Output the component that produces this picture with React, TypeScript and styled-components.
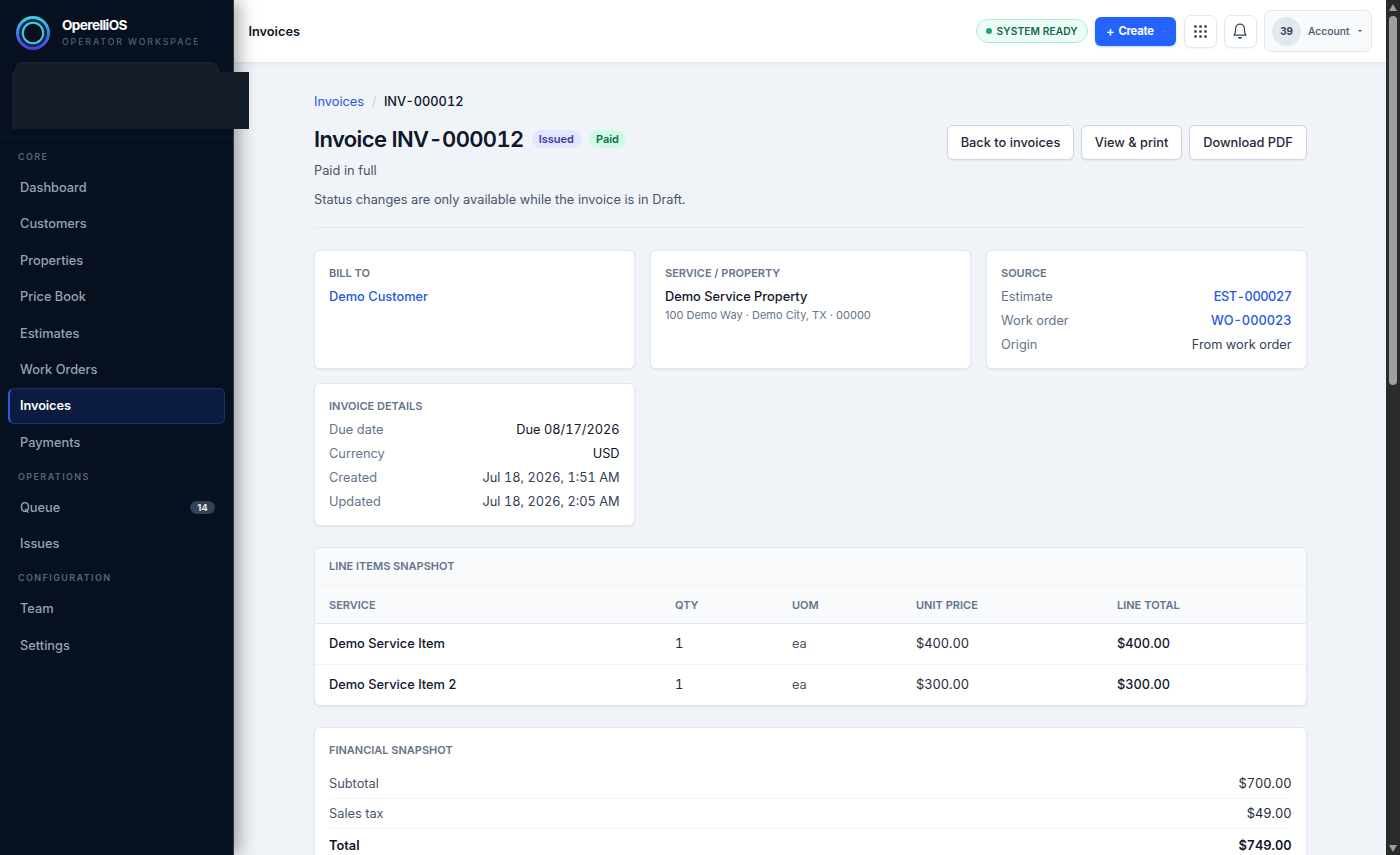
import React, { ReactNode } from 'react'
import styled, { createGlobalStyle, css } from 'styled-components';

type NavEntry = {
    label: string;
    active?: boolean;
    count?: number;
}

const navGroups: { title: string; items: NavEntry[] }[] = [{
    title: 'Core',
    items: [
        { label: 'Dashboard' },
        { label: 'Customers' },
        { label: 'Properties' },
        { label: 'Price Book' },
        { label: 'Estimates' },
        { label: 'Work Orders' },
        { label: 'Invoices', active: true },
        { label: 'Payments' },
    ],
}, {
    title: 'Operations',
    items: [{ label: 'Queue', count: 14 }, { label: 'Issues' }],
}, {
    title: 'Configuration',
    items: [{ label: 'Team' }, { label: 'Settings' }],
}];

const lineItems = [
    { service: 'Demo Service Item', qty: 1, uom: 'ea', price: '$400.00', total: '$400.00' },
    { service: 'Demo Service Item 2', qty: 1, uom: 'ea', price: '$300.00', total: '$300.00' },
];

const GlobalStyle = createGlobalStyle`
    * { box-sizing: border-box; }
    body {
        margin: 0;
        overflow: hidden;
        background: #f0f3f8;
        font-family: Inter, "Liberation Sans", sans-serif;
        font-size: 12.8px;
        line-height: 20px;
        color: #0f172a;
    }
    button { font-family: inherit; }
    h1, h2, p { margin: 0; }
`

const Shell = styled.div`
    display: grid;
    grid-template-columns: 234px 1fr 14px;
    height: 855px;
    overflow: hidden;
`

const Sidebar = styled.aside`
    position: relative;
    z-index: 2;
    background: #06101f;
    border-right: 1px solid #303a48;
    box-shadow: 4px 0 18px rgba(0, 0, 0, 0.38);
`

const SidebarTop = styled.div`
    height: 138px;
    margin-bottom: 2.4px;
    border-bottom: 1px solid #0d1725;
`

const Brand = styled.div`
    display: flex;
    align-items: center;
    gap: 11px;
    height: 62px;
    padding: 4px 0 0 15px;
`

const BrandName = styled.div`
    font-size: 13.6px;
    font-weight: 700;
    line-height: 17px;
    letter-spacing: -0.6px;
    color: #fff;
`

const BrandSub = styled.div`
    font-size: 8.8px;
    font-weight: 500;
    line-height: 15px;
    letter-spacing: 1.88px;
    color: #556274;
    text-transform: uppercase;
`

const WorkspaceCard = styled.div`
    width: 204px;
    height: 58px;
    margin-left: 15px;
    border: 1px solid #1b2531;
    border-radius: 8px;
    background: #141e29;
`

const WorkspaceMask = styled.div`
    position: absolute;
    left: 12px;
    top: 72px;
    width: 237px;
    height: 57px;
    background: #151e28;
`

const GroupTitle = styled.div`
    height: 28.5px;
    padding: 6.6px 18px 0;
    font-size: 9px;
    font-weight: 600;
    letter-spacing: 1.4px;
    text-transform: uppercase;
    color: #5a6778;
`

const NavItem = styled.a<{ $active?: boolean }>`
    display: flex;
    align-items: center;
    justify-content: space-between;
    height: 36.45px;
    margin: 0 8px;
    padding: 1.4px 9px 0 11px;
    border: 1px solid transparent;
    border-radius: 6px;
    font-weight: 500;
    color: #95a2b5;
    ${({ $active }) => $active && css`
        background: #0c1c40;
        border-color: #1b3069;
        border-left: 2px solid #2c5be0;
        padding-left: 10px;
        font-weight: 600;
        letter-spacing: -0.1px;
        color: #fff;
    `}
`

const NavCount = styled.span`
    width: 25px;
    height: 13px;
    border-radius: 7px;
    background: #334155;
    font-size: 9.6px;
    font-weight: 700;
    line-height: 13px;
    text-align: center;
    color: #e2e8f0;
`

const Main = styled.div`
    display: flex;
    flex-direction: column;
    min-width: 0;
    overflow: hidden;
`

const TopBar = styled.header`
    display: flex;
    align-items: center;
    justify-content: space-between;
    flex: none;
    height: 63px;
    padding: 0 14px;
    background: #fff;
    border-bottom: 1px solid #e3e7ee;
    box-shadow: 0 1px 3px rgba(15, 23, 42, 0.05);
`

const TopTitle = styled.div`
    padding: 1px 0 0 0.4px;
    font-weight: 600;
`

const TopActions = styled.div`
    display: flex;
    align-items: center;
`

const ReadyPill = styled.div`
    display: flex;
    align-items: center;
    gap: 4.5px;
    width: 112px;
    height: 24px;
    margin-right: 7px;
    padding: 0 0 0 9px;
    border: 1px solid #a7efd0;
    border-radius: 12px;
    background: #ecfdf5;
    font-size: 10.2px;
    font-weight: 600;
    letter-spacing: 0.12px;
    color: #13694d;
    white-space: nowrap;
`

const ReadyDot = styled.span`
    width: 6px;
    height: 6px;
    border-radius: 50%;
    background: #18a673;
`

const CreateButton = styled.button`
    display: flex;
    align-items: center;
    gap: 4px;
    width: 81px;
    height: 29px;
    margin-right: 8px;
    padding: 0 0 0 11px;
    border: 0;
    border-radius: 6px;
    background: #2563ff;
    font-size: 11.2px;
    font-weight: 700;
    letter-spacing: -0.2px;
    color: #fff;
    box-shadow: 0 1px 2px rgba(37, 99, 235, 0.3);
`

const Plus = styled.span`
    font-size: 12.8px;
    font-weight: 600;
`

const CreateCaret = styled.span`
    width: 5px;
    height: 1px;
    margin-left: 3px;
    background: #4a70e0;
`

const IconButton = styled.button`
    display: flex;
    align-items: center;
    justify-content: center;
    width: 33px;
    height: 33px;
    margin-right: 7px;
    padding: 0 1px 0 0;
    border: 1px solid #e2e8f0;
    border-radius: 7px;
    background: #fff;
    color: #334155;
    box-shadow: 0 1px 2px rgba(15, 23, 42, 0.05);
`

const AccountButton = styled.button`
    display: flex;
    align-items: center;
    width: 108px;
    height: 42px;
    padding: 0 0 0 7px;
    border: 1px solid #e2e8f0;
    border-radius: 7px;
    background: #f8fafc;
    font-size: 10.4px;
    font-weight: 500;
    color: #475569;
`

const Avatar = styled.span`
    width: 29px;
    height: 29px;
    margin-right: 7px;
    border-radius: 50%;
    background: #e2e8f0;
    font-size: 9.8px;
    font-weight: 700;
    line-height: 29px;
    color: #334155;
`

const AccountCaret = styled.span`
    margin-left: 8px;
    border: 2px solid transparent;
    border-top-color: #475569;
    border-bottom: 0;
`

const Content = styled.main`
    padding: 29px 79px 0 80px;
`

const Link = styled.a<{ $tight?: boolean }>`
    color: #2558dc;
    letter-spacing: ${({ $tight }) => $tight ? '-0.45px' : 'normal'};
`

const Breadcrumb = styled.nav`
    display: flex;
    gap: 7.6px;
    font-variant-numeric: tabular-nums;
`

const Slash = styled.span`
    color: #cbd5e1;
`

const PageHead = styled.div`
    display: flex;
    justify-content: space-between;
    height: 116px;
    padding-top: 13px;
    border-bottom: 1px solid #e4e8ee;
`

const TitleRow = styled.div`
    display: flex;
    align-items: center;
    gap: 8px;
    height: 28px;
`

const Title = styled.h1`
    font-size: 22px;
    font-weight: 600;
    line-height: 28px;
    letter-spacing: -0.63px;
    font-variant-numeric: tabular-nums;
    white-space: nowrap;
`

const Badge = styled.span<{ $tone: 'indigo' | 'green' }>`
    height: 18px;
    padding: 0 7px;
    border-radius: 9px;
    font-size: 11px;
    font-weight: 600;
    line-height: 18px;
    background: ${({ $tone }) => $tone === 'indigo' ? '#e0e7ff' : '#d1fae5'};
    color: ${({ $tone }) => $tone === 'indigo' ? '#4338ab' : '#08704f'};
`

const Note = styled.p<{ $gap: number }>`
    margin-top: ${({ $gap }) => $gap}px;
    color: #475569;
`

const HeadActions = styled.div`
    display: flex;
    gap: 7px;
`

const ActionButton = styled.button<{ $width: number }>`
    width: ${({ $width }) => $width}px;
    height: 35px;
    padding: 0;
    border: 1px solid #cdd5e1;
    border-radius: 6px;
    background: #fff;
    font-size: 12.8px;
    font-weight: 500;
    color: #1e293b;
    box-shadow: 0 1px 2px rgba(15, 23, 42, 0.06);
`

const CardGrid = styled.div`
    display: grid;
    grid-template-columns: repeat(3, 1fr);
    gap: 14.4px 15px;
    margin-top: 22px;
`

const cardCss = css`
    border: 1px solid #e2e7ee;
    border-radius: 6px;
    background: #fff;
    box-shadow: 0 1px 2px rgba(15, 23, 42, 0.07);
`

const InfoCard = styled.section`
    ${cardCss}
    padding: 14px 14.4px 13.2px 14px;
`

const CardTitle = styled.h2`
    margin-bottom: 5.8px;
    font-size: 11px;
    font-weight: 600;
    line-height: 16px;
    color: #64748b;
    text-transform: uppercase;
`

const Strong = styled.div`
    font-weight: 500;
`

const Address = styled.div`
    margin-top: -0.8px;
    font-size: 11px;
    line-height: 18px;
    color: #64748b;
`

const Field = styled.div`
    display: flex;
    justify-content: space-between;
    color: #64748b;

    & + & { margin-top: 4px; }
`

const FieldValue = styled.span<{ $medium?: boolean; $soft?: boolean }>`
    font-weight: ${({ $medium }) => $medium ? 500 : 400};
    font-variant-numeric: tabular-nums;
    color: ${({ $soft }) => $soft ? '#334155' : '#0f172a'};
`

const TableCard = styled.section`
    ${cardCss}
    margin-top: 21px;
    overflow: hidden;
`

const TableTitle = styled.h2`
    height: 37.5px;
    padding-left: 14px;
    border-bottom: 1px solid #eef1f5;
    background: #f9fafc;
    font-size: 11px;
    font-weight: 600;
    line-height: 37px;
    color: #64748b;
    text-transform: uppercase;
`

const TableRow = styled.div<{ $head?: boolean }>`
    display: grid;
    grid-template-columns: 346px 117px 124px 201px 1fr;
    align-items: center;
    height: 40.8px;
    padding-left: 14px;
    font-variant-numeric: tabular-nums;

    & + & { border-top: 1px solid #f1f4f8; }

    ${({ $head }) => $head && css`
        height: 37.4px;
        background: #f9fafc;
        font-size: 11px;
        font-weight: 600;
        color: #64748b;
        text-transform: uppercase;

        && + div { border-top: 1px solid #e2e7ee; }
    `}
`

const Cell = styled.span<{ $tone?: 'soft' | 'mid'; $weight?: number }>`
    font-weight: ${({ $weight }) => $weight ?? 'inherit'};
    color: ${({ $tone }) => $tone === 'soft' ? '#475569' : $tone === 'mid' ? '#1e293b' : 'inherit'};
`

const FinanceCard = styled.section`
    ${cardCss}
    height: 170px;
    margin-top: 21.4px;
    padding: 14px 14.4px 0 14px;
`

const FinanceRow = styled.div<{ $total?: boolean }>`
    display: flex;
    justify-content: space-between;
    height: 30px;
    padding-top: 5px;
    border-bottom: 1px solid #f1f4f8;
    font-variant-numeric: tabular-nums;
    color: #475569;
    ${({ $total }) => $total && css`
        padding-top: 7px;
        border-bottom: 0;
        font-weight: 600;
        color: #0f172a;
    `}
`

const FinanceRows = styled.div`
    margin-top: 10.4px;
`

const ScrollTrack = styled.div`
    display: flex;
    flex-direction: column;
    align-items: center;
    padding: 4px 0 3px;
    background: #2b2b2b;
`

const ScrollArrow = styled.span<{ $down?: boolean }>`
    border: 4px solid transparent;
    ${({ $down }) => $down
        ? css`margin-top: auto; border-top: 7px solid #9f9f9f; border-bottom: 0;`
        : css`border-bottom: 7px solid #9f9f9f; border-top: 0;`}
`

const ScrollThumb = styled.span`
    width: 8px;
    height: 369px;
    margin-top: 5px;
    border-radius: 4px;
    background: #9f9f9f;
`

function Logo() {
    return <svg width="36" height="36" viewBox="0 0 36 36" fill="none">
        <defs>
            <linearGradient id="ring" x1="18" y1="0" x2="18" y2="36" gradientUnits="userSpaceOnUse">
                <stop offset="0" stopColor="#38dcd8" />
                <stop offset="0.5" stopColor="#3b82e0" />
                <stop offset="1" stopColor="#5532d6" />
            </linearGradient>
        </defs>
        <circle cx="18" cy="18" r="15.4" stroke="url(#ring)" strokeWidth="3.2" />
        <circle cx="18" cy="18" r="12.3" stroke="#10265a" strokeWidth="3" />
        <circle cx="18" cy="18" r="10.2" stroke="#42cfd0" strokeWidth="2" />
    </svg>
}

function GridIcon() {
    return <svg width="13" height="13" viewBox="0 0 13 13" fill="currentColor">
        {[0.2, 5.2, 10.2].map(y => [0.2, 5.2, 10.2].map(x =>
            <rect key={`${x}-${y}`} x={x} y={y} width="2.6" height="2.6" rx="0.7" />
        ))}
    </svg>
}

function BellIcon() {
    return <svg width="16" height="18" viewBox="0 0 16 18" fill="none" stroke="currentColor" strokeWidth="1.2" strokeLinejoin="round" strokeLinecap="round">
        <path d="M2 13.2C3.2 12 3.6 10.5 3.6 6.6a4.4 4.4 0 0 1 8.8 0c0 3.9.4 5.4 1.6 6.6z" />
        <path d="M6.6 15.6c.5.7 2.3.7 2.8 0z" fill="currentColor" />
    </svg>
}

function Info({ label, children, medium, soft }: { label: string; children: ReactNode; medium?: boolean; soft?: boolean }) {
    return <Field>
        <span>{label}</span>
        <FieldValue $medium={medium} $soft={soft}>{children}</FieldValue>
    </Field>
}

export default function App() {
    return <Shell>
        <GlobalStyle />
        <Sidebar>
            <SidebarTop>
                <Brand>
                    <Logo />
                    <div>
                        <BrandName>OperelliOS</BrandName>
                        <BrandSub>Operator workspace</BrandSub>
                    </div>
                </Brand>
                <WorkspaceCard />
                <WorkspaceMask />
            </SidebarTop>
            {navGroups.map(group => <nav key={group.title}>
                <GroupTitle>{group.title}</GroupTitle>
                {group.items.map(item => <NavItem key={item.label} $active={item.active}>
                    {item.label}
                    {item.count && <NavCount>{item.count}</NavCount>}
                </NavItem>)}
            </nav>)}
        </Sidebar>

        <Main>
            <TopBar>
                <TopTitle>Invoices</TopTitle>
                <TopActions>
                    <ReadyPill><ReadyDot />SYSTEM READY</ReadyPill>
                    <CreateButton><Plus>+</Plus>Create<CreateCaret /></CreateButton>
                    <IconButton aria-label="Apps"><GridIcon /></IconButton>
                    <IconButton aria-label="Notifications"><BellIcon /></IconButton>
                    <AccountButton><Avatar>39</Avatar>Account<AccountCaret /></AccountButton>
                </TopActions>
            </TopBar>

            <Content>
                <Breadcrumb>
                    <Link>Invoices</Link>
                    <Slash>/</Slash>
                    <Strong>INV-000012</Strong>
                </Breadcrumb>
                <PageHead>
                    <div>
                        <TitleRow>
                            <Title>Invoice INV-000012</Title>
                            <Badge $tone="indigo">Issued</Badge>
                            <Badge $tone="green">Paid</Badge>
                        </TitleRow>
                        <Note $gap={8}>Paid in full</Note>
                        <Note $gap={9}>Status changes are only available while the invoice is in Draft.</Note>
                    </div>
                    <HeadActions>
                        <ActionButton $width={127}>Back to invoices</ActionButton>
                        <ActionButton $width={101}>View &amp; print</ActionButton>
                        <ActionButton $width={118}>Download PDF</ActionButton>
                    </HeadActions>
                </PageHead>

                <CardGrid>
                    <InfoCard>
                        <CardTitle>Bill to</CardTitle>
                        <Strong><Link>Demo Customer</Link></Strong>
                    </InfoCard>
                    <InfoCard>
                        <CardTitle>Service / Property</CardTitle>
                        <Strong>Demo Service Property</Strong>
                        <Address>100 Demo Way · Demo City, TX · 00000</Address>
                    </InfoCard>
                    <InfoCard>
                        <CardTitle>Source</CardTitle>
                        <Info label="Estimate" medium><Link $tight>EST-000027</Link></Info>
                        <Info label="Work order" medium><Link>WO-000023</Link></Info>
                        <Info label="Origin" soft>From work order</Info>
                    </InfoCard>
                    <InfoCard>
                        <CardTitle>Invoice details</CardTitle>
                        <Info label="Due date">Due 08/17/2026</Info>
                        <Info label="Currency">USD</Info>
                        <Info label="Created" soft>Jul 18, 2026, 1:51 AM</Info>
                        <Info label="Updated" soft>Jul 18, 2026, 2:05 AM</Info>
                    </InfoCard>
                </CardGrid>

                <TableCard>
                    <TableTitle>Line items snapshot</TableTitle>
                    <TableRow $head>
                        <span>Service</span>
                        <span>Qty</span>
                        <span>UOM</span>
                        <span>Unit price</span>
                        <span>Line total</span>
                    </TableRow>
                    {lineItems.map(item => <TableRow key={item.service}>
                        <Cell $weight={500}>{item.service}</Cell>
                        <Cell $tone="mid">{item.qty}</Cell>
                        <Cell $tone="soft">{item.uom}</Cell>
                        <Cell $tone="mid">{item.price}</Cell>
                        <Cell $weight={500}>{item.total}</Cell>
                    </TableRow>)}
                </TableCard>

                <FinanceCard>
                    <CardTitle>Financial snapshot</CardTitle>
                    <FinanceRows>
                        <FinanceRow><span>Subtotal</span><Cell $tone="mid">$700.00</Cell></FinanceRow>
                        <FinanceRow><span>Sales tax</span><Cell $tone="mid">$49.00</Cell></FinanceRow>
                        <FinanceRow $total><span>Total</span><span>$749.00</span></FinanceRow>
                    </FinanceRows>
                </FinanceCard>
            </Content>
        </Main>

        <ScrollTrack>
            <ScrollArrow />
            <ScrollThumb />
            <ScrollArrow $down />
        </ScrollTrack>
    </Shell>
}
